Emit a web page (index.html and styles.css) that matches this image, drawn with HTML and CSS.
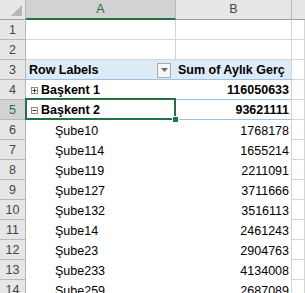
FILE: index.html
```html
<!DOCTYPE html>
<html>
<head>
<meta charset="utf-8">
<link rel="stylesheet" href="styles.css">
</head>
<body>
<div class="sheet">
  <div class="hd corner"><svg width="25" height="19" viewBox="0 0 25 19"><polygon points="22,5 22,16 11,16" fill="#b5b5b5"/></svg></div>
  <div class="hd col sel">A</div>
  <div class="hd col">B</div>
  <div class="hd col last"></div>

  <div class="hd rn">1</div><div class="c grid"></div><div class="c grid"></div><div class="c grid"></div>
  <div class="hd rn">2</div><div class="c grid"></div><div class="c grid"></div><div class="c grid"></div>

  <div class="hd rn">3</div>
  <div class="c ph a"><span class="b">Row Labels</span><span class="fbtn"><svg width="7" height="4" viewBox="0 0 7 4"><polygon points="0,0 7,0 3.5,4" fill="#6b6b6b"/></svg></span></div>
  <div class="c ph bcol"><span class="b">Sum of Aylık Gerç</span></div>
  <div class="c grid"></div>

  <div class="hd rn">4</div>
  <div class="c pl a"><span class="exp"><svg width="7" height="7" viewBox="0 0 7 7"><rect x="0.5" y="0.5" width="6" height="6" fill="#fff" stroke="#8a8a8a"/><path d="M1.5 3.5h4M3.5 1.5v4" stroke="#333" stroke-width="1"/></svg></span><span class="b">Başkent 1</span></div>
  <div class="c pl bcol num b">116050633</div>
  <div class="c grid"></div>

  <div class="hd rn rsel">5</div>
  <div class="c pl a"><span class="exp"><svg width="7" height="7" viewBox="0 0 7 7"><rect x="0.5" y="0.5" width="6" height="6" fill="#fff" stroke="#8a8a8a"/><path d="M1.5 3.5h4" stroke="#333" stroke-width="1"/></svg></span><span class="b">Başkent 2</span></div>
  <div class="c pl bcol num b">93621111</div>
  <div class="c grid"></div>

  <div class="hd rn">6</div><div class="c pi a sub">Şube10</div><div class="c pi bcol num">1768178</div><div class="c grid"></div>
  <div class="hd rn">7</div><div class="c pi a sub">Şube114</div><div class="c pi bcol num">1655214</div><div class="c grid"></div>
  <div class="hd rn">8</div><div class="c pi a sub">Şube119</div><div class="c pi bcol num">2211091</div><div class="c grid"></div>
  <div class="hd rn">9</div><div class="c pi a sub">Şube127</div><div class="c pi bcol num">3711666</div><div class="c grid"></div>
  <div class="hd rn">10</div><div class="c pi a sub">Şube132</div><div class="c pi bcol num">3516113</div><div class="c grid"></div>
  <div class="hd rn">11</div><div class="c pi a sub">Şube14</div><div class="c pi bcol num">2461243</div><div class="c grid"></div>
  <div class="hd rn">12</div><div class="c pi a sub">Şube23</div><div class="c pi bcol num">2904763</div><div class="c grid"></div>
  <div class="hd rn">13</div><div class="c pi a sub">Şube233</div><div class="c pi bcol num">4134008</div><div class="c grid"></div>
  <div class="hd rn">14</div><div class="c pi a sub">Şube259</div><div class="c pi bcol num">2687089</div><div class="c grid"></div>

  <div class="selbox"><span class="handle"></span></div>
</div>
</body>
</html>
```

FILE: styles.css
```css
html, body {
  margin: 0;
  padding: 0;
  background: #fff;
}
body {
  width: 305px;
  height: 293px;
  overflow: hidden;
  font-family: "Liberation Sans", Arial, sans-serif;
  font-size: 12.5px;
  color: #000;
}
.sheet {
  position: relative;
  display: grid;
  grid-template-columns: 26px 150px 116px 1fr;
  grid-auto-rows: 20px;
}
.sheet > div {
  box-sizing: border-box;
  overflow: hidden;
  white-space: nowrap;
  line-height: 15px;
}
.hd {
  background: #e6e6e6;
  color: #444;
  border-right: 1px solid #b8b8b8;
  border-bottom: 1px solid #b8b8b8;
  display: flex;
  align-items: flex-end;
  justify-content: center;
  padding-bottom: 1px;
}
.corner {
  padding: 0;
  align-items: stretch;
  border-bottom-color: #9e9e9e;
}
.corner svg { display: block; }
.col {
  border-bottom-color: #9e9e9e;
  padding-bottom: 2px;
}
.col.sel {
  background: #d2d2d2;
  color: #217346;
  border-bottom: 2px solid #217346;
  padding-bottom: 1px;
}
.col.last { border-right: none; }
.rn { background: #e6e6e6; }
.rn.rsel {
  background: #d2d2d2;
  color: #217346;
}
.c {
  display: flex;
  align-items: flex-end;
  padding-bottom: 1px;
  background: #fff;
}
.grid {
  border-right: 1px solid #d4d4d4;
  border-bottom: 1px solid #d4d4d4;
}
.bcol { border-right: 1px solid #d4d4d4; }
.ph {
  background: #ddebf7;
  border-bottom: 1px solid #9bc2e6;
}
.ph.a {
  justify-content: space-between;
  padding-left: 3px;
  padding-right: 5px;
}
.ph.bcol { padding-left: 2px; }
.pl { border-bottom: 1px solid #9bc2e6; }
.pl.a { padding-left: 5px; }
.a.sub { padding-left: 29px; }
.num {
  justify-content: flex-end;
  padding-right: 2px;
}
.b { font-weight: bold; }
.fbtn {
  box-sizing: border-box;
  width: 14px;
  height: 15px;
  border: 1px solid #ababab;
  background: #f5f5f5;
  display: flex;
  align-items: center;
  justify-content: center;
  align-self: center;
  margin-top: 2px;
}
.fbtn svg { display: block; }
.exp {
  display: flex;
  align-self: center;
  margin-top: 3px;
  margin-right: 3px;
}
.exp svg { display: block; }
.selbox {
  position: absolute;
  left: 25px;
  top: 98px;
  width: 151px;
  height: 22px;
  box-sizing: border-box;
  border: 2px solid #217346;
  overflow: visible !important;
}
.handle {
  position: absolute;
  right: -5px;
  bottom: -5px;
  width: 5px;
  height: 5px;
  background: #217346;
  border: 1px solid #fff;
}
```
